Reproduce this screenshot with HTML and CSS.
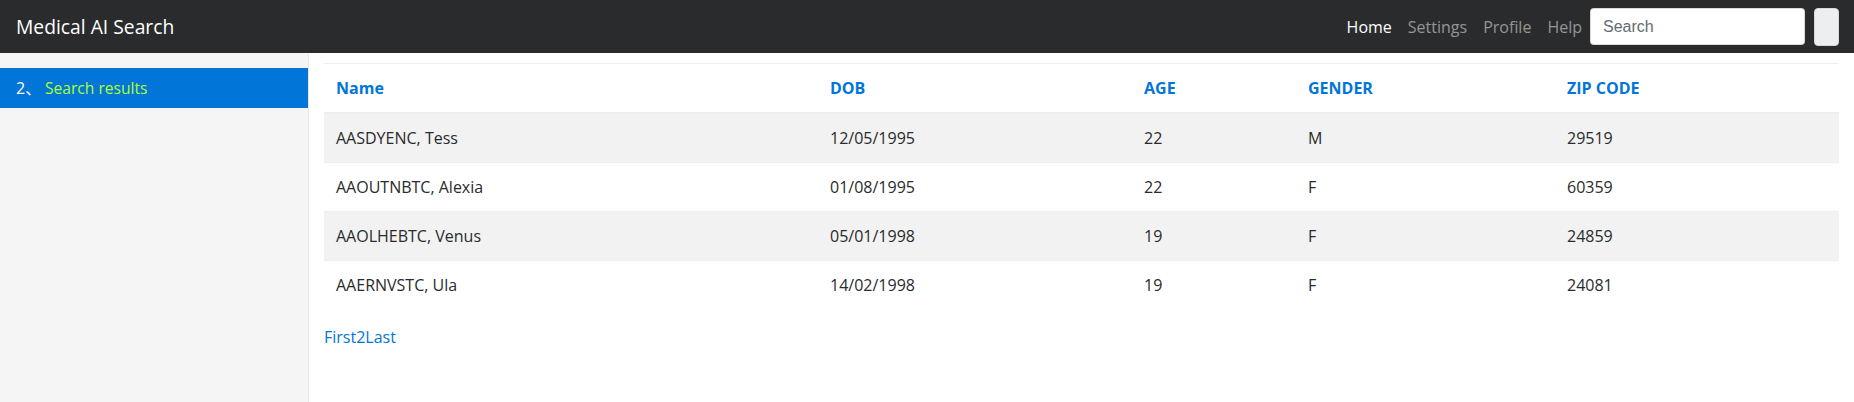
FILE: index.html
```html
<!DOCTYPE html>
<html lang="en">
<head>
<meta charset="utf-8">
<title>Medical AI Search</title>
<link rel="stylesheet" href="styles.css">
</head>
<body>
<nav class="navbar">
  <a class="brand" href="#">Medical AI Search</a>
  <ul class="nav-links">
    <li><a class="nav-link active" href="#">Home</a></li>
    <li><a class="nav-link" href="#">Settings</a></li>
    <li><a class="nav-link" href="#">Profile</a></li>
    <li><a class="nav-link" href="#">Help</a></li>
  </ul>
  <form class="search-form">
    <input class="search-input" type="text" placeholder="Search">
    <button class="search-btn" type="button"></button>
  </form>
</nav>
<div class="layout">
  <aside class="sidebar">
    <a class="side-item active" href="#"><span class="side-num">2、</span><span class="side-label">Search results</span></a>
  </aside>
  <main class="main">
    <table class="results">
      <thead>
        <tr>
          <th class="c-name">Name</th>
          <th class="c-dob">DOB</th>
          <th class="c-age">AGE</th>
          <th class="c-gender">GENDER</th>
          <th class="c-zip">ZIP CODE</th>
        </tr>
      </thead>
      <tbody>
        <tr><td>AASDYENC, Tess</td><td>12/05/1995</td><td>22</td><td>M</td><td>29519</td></tr>
        <tr><td>AAOUTNBTC, Alexia</td><td>01/08/1995</td><td>22</td><td>F</td><td>60359</td></tr>
        <tr><td>AAOLHEBTC, Venus</td><td>05/01/1998</td><td>19</td><td>F</td><td>24859</td></tr>
        <tr><td>AAERNVSTC, Ula</td><td>14/02/1998</td><td>19</td><td>F</td><td>24081</td></tr>
      </tbody>
    </table>
    <div class="pager"><a href="#">First</a><a href="#">2</a><a href="#">Last</a></div>
  </main>
</div>
</body>
</html>
```
FILE: styles.css
```css
* { box-sizing: border-box; }
html, body { margin: 0; padding: 0; }
body {
  font-family: "Open Sans", "Noto Sans CJK SC", sans-serif;
  font-size: 16px;
  line-height: 24px;
  color: #292b2c;
  background: #fff;
  height: 100vh;
  display: flex;
  flex-direction: column;
}
a { text-decoration: none; }

.navbar {
  height: 53px;
  flex: 0 0 53px;
  background: #292b2c;
  display: flex;
  align-items: center;
  padding: 0 15px 0 16px;
}
.brand {
  color: #fff;
  font-size: 19.3px;
  line-height: 28px;
}
.nav-links {
  list-style: none;
  margin: 0 0 0 auto;
  padding: 0;
  display: flex;
}
.nav-link {
  display: block;
  padding: 0 8px;
  color: rgba(255,255,255,.5);
  font-size: 16px;
}
.nav-link.active { color: #fff; }
.search-form { display: flex; align-items: center; }
.search-input {
  width: 215px;
  height: 37px;
  padding: 6px 12px;
  border: 1px solid rgba(0,0,0,.15);
  border-radius: 4px;
  background: #fff;
  font-family: "Liberation Sans", Arial, sans-serif;
  font-size: 16px;
  color: #464a4c;
  outline: none;
}
.search-input::placeholder { color: #636c72; opacity: 1; }
.search-btn {
  width: 25px;
  height: 38px;
  margin-left: 9px;
  border: 1px solid #d6d8da;
  border-radius: 4px;
  background: #eceeef;
  padding: 0;
}

.layout {
  flex: 1;
  display: flex;
  min-height: 0;
}
.sidebar {
  width: 309px;
  flex: 0 0 309px;
  background: #f5f5f5;
  border-right: 1px solid #e8e8e8;
  padding-top: 15px;
}
.side-item {
  display: flex;
  height: 40px;
  align-items: center;
  padding: 0 16px;
  background: #0275d8;
}
.side-num { color: #fff; width: 29px; }
.side-label { color: #adff2f; font-size: 15.6px; }

.main {
  flex: 1;
  padding: 10px 15px 0;
}
.results {
  width: 100%;
  border-collapse: collapse;
  table-layout: fixed;
  margin-bottom: 16px;
}
.results th, .results td {
  padding: 12px;
  text-align: left;
  border-top: 1px solid #eceeef;
  vertical-align: top;
}
.results th {
  color: #0275d8;
  font-weight: 700;
  font-size: 16px;
  border-bottom: 2px solid #eceeef;
}
.results tbody tr:nth-child(odd) { background: rgba(0,0,0,.05); }
.c-name { width: 494px; }
.c-dob { width: 314px; }
.c-age { width: 164px; }
.c-gender { width: 259px; }
.c-zip { width: 284px; }
.pager a { color: #0275d8; }
```
